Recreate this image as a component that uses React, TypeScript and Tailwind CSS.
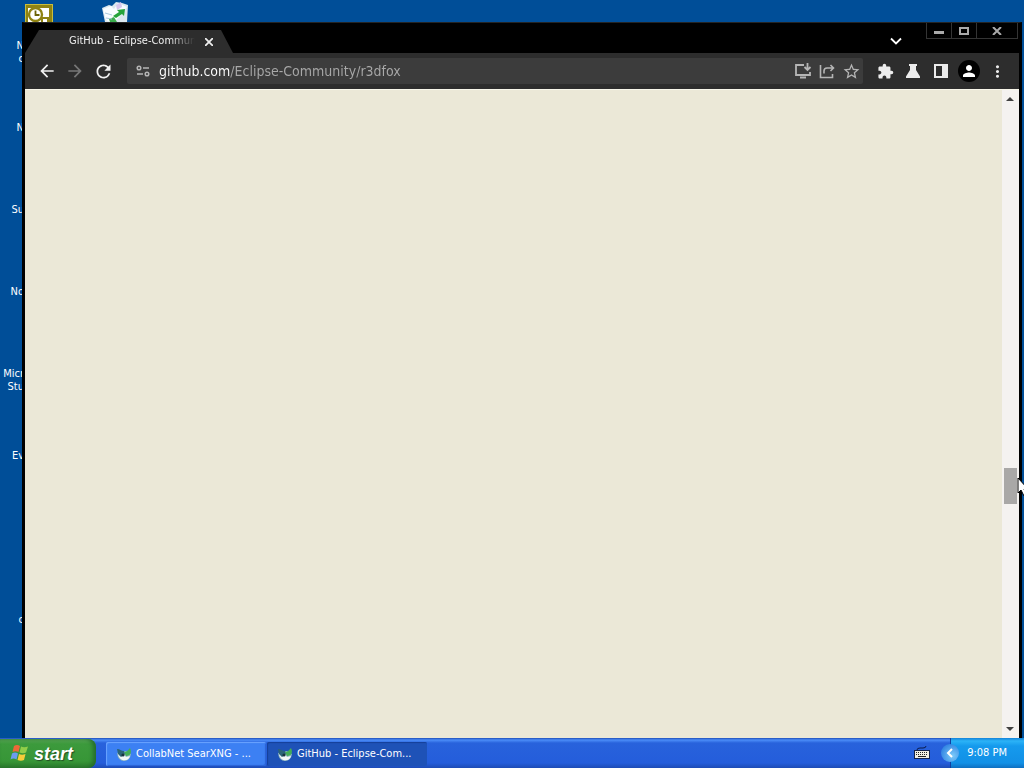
import type { ReactNode } from 'react';
import { MdArrowBack, MdArrowForward, MdRefresh, MdExtension, MdMoreVert, MdPerson, MdStarBorder } from 'react-icons/md';
import clsx from 'clsx';

const shortcuts = [
  ['N', 'c'],
  ['N'],
  ['Su'],
  ['No'],
  ['Micr', 'Stu'],
  ['Ev'],
  [],
  ['c'],
];

function OutlookIcon() {
  return (
    <svg width="28" height="28" viewBox="0 0 28 28" aria-hidden="true">
      <rect x="0.5" y="0.5" width="27" height="27" fill="#8f8312" stroke="#c9bd3c" />
      <rect x="3" y="4" width="21" height="20" fill="#fff" />
      <circle cx="10.5" cy="10.5" r="6.5" fill="#fff" stroke="#8f8312" strokeWidth="2.4" />
      <path d="M10.5 6.5v4.5h4" fill="none" stroke="#6b6208" strokeWidth="1.8" />
      <path d="M17 14h6v6h-6z" fill="#fff" stroke="#8f8312" strokeWidth="2" />
    </svg>
  );
}

function RecycleBinIcon() {
  return (
    <svg width="28" height="32" viewBox="0 0 28 32" className="-mt-1" aria-hidden="true">
      <path d="M1 8 8 5l3 1 4-4 6 1 6 2-1 17-3 11H6L4 22z" fill="#dbe7ee" />
      <path d="m2 9 8-3 3 3 4-6 9 4-7 9-7 7-7-3z" fill="#f8fcff" />
      <path d="m15 5 5-3 1 5-5 3z" fill="#d7c5ec" />
      <path d="m12 16 6-4-2-2 8-1-1 7-2-2-6 4z" fill="#25a33a" />
      <path d="m8 19 5-2 3 5H9z" fill="#39ad4c" />
      <path d="m4 13 7 2M5 18l6 1" stroke="#a9c8dc" />
    </svg>
  );
}

function TuneIcon() {
  return (
    <svg width="16" height="16" viewBox="0 0 16 16" fill="none" stroke="#b5b5b5" strokeWidth="1.5" aria-hidden="true">
      <circle cx="4" cy="5" r="1.8" />
      <path d="M8 5h6M2 11h6" />
      <circle cx="12" cy="11" r="1.8" />
    </svg>
  );
}

function InstallIcon() {
  return (
    <svg width="18" height="18" viewBox="0 0 18 18" fill="none" stroke="#b5b5b5" strokeWidth="1.8" aria-hidden="true">
      <path d="M10 3H2v10h14v-3M6 15.500h6" />
      <path d="M13.500 1v7M10.500 5l3 3 3-3" />
    </svg>
  );
}

function ShareIcon() {
  return (
    <svg width="18" height="18" viewBox="0 0 18 18" fill="none" stroke="#b5b5b5" strokeWidth="1.6" aria-hidden="true">
      <path d="M2.500 3v12.500h12V12" />
      <path d="M6 11.500V9q0-3 3-3h6M12.500 3l3 3-3 3" />
    </svg>
  );
}

function FlaskIcon() {
  return (
    <svg width="16" height="16" viewBox="0 0 16 16" fill="#ececec" aria-hidden="true">
      <path d="M4 1h8v2h-1v4l4 6.500V15H1v-1.500L5 7V3H4z" />
    </svg>
  );
}

function SidePanelIcon() {
  return (
    <svg width="14" height="14" viewBox="0 0 14 14" aria-hidden="true">
      <rect x="1" y="1" width="12" height="12" fill="none" stroke="#ececec" strokeWidth="2" />
      <path d="M8 1h5v12H8z" fill="#ececec" />
    </svg>
  );
}

function BrowserIcon() {
  return (
    <svg width="16" height="16" viewBox="0 0 16 16" className="shrink-0" aria-hidden="true">
      <path d="M1 7q1 8 7 8 6 0 7-7l-5-3z" fill="#8fb7c0" />
      <path d="M2 8c1 8 11 8 12 2l-4 1-3-4z" fill="#f1f7f8" />
      <path d="M1 3c3 0 4 2 7 2l1 3-4 3-3-3z" fill="#2a6478" />
      <path d="M8 6c3 0 4-2 6-4 2 4 1 8-4 8z" fill="#43ad57" />
      <circle cx="7" cy="9" r="1.6" fill="#16323d" />
    </svg>
  );
}

function WindowsFlag() {
  return (
    <svg width="20" height="19" viewBox="0 0 20 19" aria-hidden="true">
      <path d="M4 2q3-2 6 0L8.500 8q-3-1.500-6 0z" fill="#ee6838" />
      <path d="M11 2.500q3 1.500 7 0l-2 6q-3 1.500-6.500 0z" fill="#91ce49" />
      <path d="M2 9.500q3-2 6 0l-1.500 6q-3-2-6 0z" fill="#6b9cf0" />
      <path d="M9 10q3 1.500 6.500 0l-1.500 6q-3 1.500-6.500 0z" fill="#f7cd3a" />
    </svg>
  );
}

function KeyboardIcon() {
  return (
    <svg width="16" height="14" viewBox="0 0 16 14" aria-hidden="true">
      <path d="M3 4q0-2 3-2h3q3 0 3-2" fill="none" stroke="#0b1c4d" />
      <rect x="0.500" y="4.500" width="15" height="8" fill="#f1eee2" stroke="#14224a" />
      <path d="M2 6.500h12M2 8.500h12" stroke="#222" strokeDasharray="1 1" />
      <path d="M4 10.500h8" stroke="#222" />
    </svg>
  );
}

function ToolButton({ label, className, children }: { label: string; className?: string; children: ReactNode }) {
  return (
    <button type="button" aria-label={label} className={clsx('flex h-7 w-7 shrink-0 items-center justify-center', className)}>
      {children}
    </button>
  );
}

function TaskButton({ title, active }: { title: string; active?: boolean }) {
  return (
    <button
      type="button"
      className={clsx(
        'flex h-6 w-40 items-center gap-1 rounded-xs pl-2.5 text-left text-[11px] text-white',
        active
          ? 'bg-[#1e52b7] shadow-[inset_1px_1px_1px_#15409a]'
          : 'bg-[#3c80f3] shadow-[inset_1px_1px_1px_#6ba4ff,inset_-1px_-1px_1px_#2a62d5]'
      )}
    >
      <BrowserIcon />
      <span className="whitespace-nowrap">{title}</span>
    </button>
  );
}

function BrowserWindow() {
  return (
    <section className="absolute top-[22px] right-[2px] bottom-0 left-[22px] flex flex-col border-x-3 border-t border-black border-t-[#242424] bg-black">
      <header className="flex h-[30px] shrink-0 items-end pr-px">
        <div className="flex h-[23px] w-52 items-center bg-[#2d2d2d] pl-11 [clip-path:polygon(14px_0,196px_0,208px_100%,0_100%)]">
          <span className="w-32 overflow-hidden text-[11px] whitespace-nowrap text-[#f0f0f0] [mask-image:linear-gradient(to_right,#000_100px,transparent_126px)]">
            GitHub - Eclipse-Commun
          </span>
          <button type="button" aria-label="Close tab" className="ml-1 flex h-5 w-4 items-center justify-center">
            <svg width="8" height="8" viewBox="0 0 8 8" stroke="#eee" strokeWidth="1.800">
              <path d="m0 0 8 8M8 0 0 8" />
            </svg>
          </button>
        </div>
        <div className="ml-auto flex h-full">
          <button type="button" aria-label="Search tabs" className="mr-4 flex h-6 w-7 items-center justify-center self-end">
            <svg width="12" height="8" viewBox="0 0 12 8" fill="none" stroke="#fff" strokeWidth="1.8">
              <path d="m1 1.500 5 5 5-5" />
            </svg>
          </button>
          <div className="flex h-4 border-x border-b border-[#343434]">
            <button type="button" aria-label="Minimize" className="flex w-6 items-end justify-center pb-1">
              <svg width="10" height="3" viewBox="0 0 10 3"><path d="M0 0h10v3H0z" fill="#aaa" /></svg>
            </button>
            <button type="button" aria-label="Maximize" className="flex w-[26px] items-center justify-center border-x border-[#343434]">
              <svg width="10" height="8" viewBox="0 0 10 8"><path d="M1 1h8v6H1z" fill="none" stroke="#aaa" strokeWidth="2" /></svg>
            </button>
            <button type="button" aria-label="Close" className="flex w-10 items-center justify-center">
              <svg width="10" height="8" viewBox="0 0 10 8" stroke="#aaa" strokeWidth="2"><path d="m1 0 8 8M9 0 1 8" /></svg>
            </button>
          </div>
        </div>
      </header>

      <nav className="flex h-9 shrink-0 items-center bg-[#2d2d2d] px-2">
        <ToolButton label="Back" className="text-[#f1f1f1]"><MdArrowBack size={20} /></ToolButton>
        <ToolButton label="Forward" className="text-[#777]"><MdArrowForward size={20} /></ToolButton>
        <ToolButton label="Reload" className="text-[#f1f1f1]"><MdRefresh size={21} /></ToolButton>
        <div className="ml-2.5 flex h-[26px] flex-1 items-center rounded-xs bg-[#3c3c3c] pl-2">
          <TuneIcon />
          <input
            type="text"
            aria-label="Address"
            defaultValue="github.com/Eclipse-Community/r3dfox"
            className="ml-2 min-w-0 flex-1 bg-[linear-gradient(to_right,#fff_71px,#a9a9a9_71px)] bg-clip-text text-sm text-transparent outline-none"
          />
          <button type="button" aria-label="Install" className="flex w-6 justify-center"><InstallIcon /></button>
          <button type="button" aria-label="Share" className="flex w-6 justify-center"><ShareIcon /></button>
          <button type="button" aria-label="Bookmark" className="flex w-6 justify-center text-[#b5b5b5]"><MdStarBorder size={19} /></button>
        </div>
        <div className="ml-2 flex items-center">
          <ToolButton label="Extensions" className="text-[#ececec]"><MdExtension size={17} /></ToolButton>
          <ToolButton label="Experiments"><FlaskIcon /></ToolButton>
          <ToolButton label="Side panel"><SidePanelIcon /></ToolButton>
          <ToolButton label="Profile">
            <span className="flex h-[22px] w-[22px] items-center justify-center rounded-full bg-black text-white">
              <MdPerson size={18} />
            </span>
          </ToolButton>
          <ToolButton label="Menu" className="text-[#ececec]"><MdMoreVert size={19} /></ToolButton>
        </div>
      </nav>

      <div className="flex flex-1 border-t border-[#f8f6ea] bg-[#ebe8d7]">
        <main className="flex-1" />
        <div className="flex w-[17px] flex-col items-center bg-[#f4f2f0] pr-px">
          <button type="button" aria-label="Scroll up" className="flex h-[18px] w-full items-center justify-center">
            <svg width="8" height="4" viewBox="0 0 8 4"><path d="m0 4 4-4 4 4z" fill="#404040" /></svg>
          </button>
          <div className="flex w-full flex-1 flex-col items-center">
            <div className="grow-361" />
            <div className="h-9 w-[13px] bg-[#a9a8a7]" />
            <div className="grow-216" />
          </div>
          <button type="button" aria-label="Scroll down" className="flex h-[18px] w-full items-center justify-center">
            <svg width="8" height="4" viewBox="0 0 8 4"><path d="m0 0 4 4 4-4z" fill="#404040" /></svg>
          </button>
        </div>
      </div>
    </section>
  );
}

function Taskbar() {
  return (
    <footer className="flex h-[30px] shrink-0 items-end bg-[linear-gradient(to_bottom,#1e4db8_0,#4b8df8_2px,#2862dc_5px,#245ddb_25px,#1d4bb5_30px)]">
      <button
        type="button"
        className="flex h-[29px] w-24 items-center gap-1 rounded-r-lg bg-[linear-gradient(to_bottom,#5eac5a_0,#3c9a3c_5px,#379637_22px,#2b7b2c_29px)] pl-2.5 font-['Liberation_Sans',sans-serif] text-lg font-bold text-white italic shadow-[inset_-3px_0_4px_#246c2b] [text-shadow:1px_1px_1px_#234d23]"
      >
        <WindowsFlag />
        start
      </button>
      <div className="mb-0.5 ml-2.5 flex gap-px">
        <TaskButton title="CollabNet SearXNG - ..." />
        <TaskButton title="GitHub - Eclipse-Com..." active />
      </div>
      <div className="ml-auto flex h-full items-center">
        <KeyboardIcon />
        <div className="ml-5 flex h-full items-center border-l border-[#123f9f] bg-[linear-gradient(to_bottom,#1482d8_0,#2bb3f7_3px,#159aed_8px,#1290e6_25px,#0e6fc0_30px)] pr-[17px]">
          <button type="button" aria-label="Show hidden icons" className="-ml-2.5 flex h-[18px] w-[18px] items-center justify-center rounded-full bg-[radial-gradient(circle_at_65%_65%,#7ccbfa,#1a6edb)]">
            <svg width="8" height="10" viewBox="0 0 8 10" fill="none" stroke="#fff" strokeWidth="2"><path d="M6 1 2 5l4 4" /></svg>
          </button>
          <time className="ml-2 text-[11px] whitespace-nowrap text-white">9:08 PM</time>
        </div>
      </div>
    </footer>
  );
}

export default function App() {
  return (
    <div className="flex h-screen flex-col overflow-hidden bg-[#004e98] font-['DejaVu_Sans_Condensed','DejaVu_Sans',sans-serif]">
      <div className="relative flex-1">
        <div className="flex h-[39px] items-start gap-12 pt-1 pl-[25px]">
          <OutlookIcon />
          <RecycleBinIcon />
        </div>
        <ul className="w-6 text-[11px] leading-[13px] text-white">
          {shortcuts.map((lines, i) => (
            <li key={i} className="flex h-[82px] flex-col items-end">
              {lines.map((line) => (
                <span key={line}>{line}</span>
              ))}
            </li>
          ))}
        </ul>
        <BrowserWindow />
        <svg width="12" height="20" viewBox="0 0 12 20" className="absolute top-[477px] right-[-5px]" aria-hidden="true">
          <path d="M1 1v15l3-3 3 6 2-1-2-6h4z" fill="#fff" stroke="#000" />
        </svg>
      </div>
      <Taskbar />
    </div>
  );
}
